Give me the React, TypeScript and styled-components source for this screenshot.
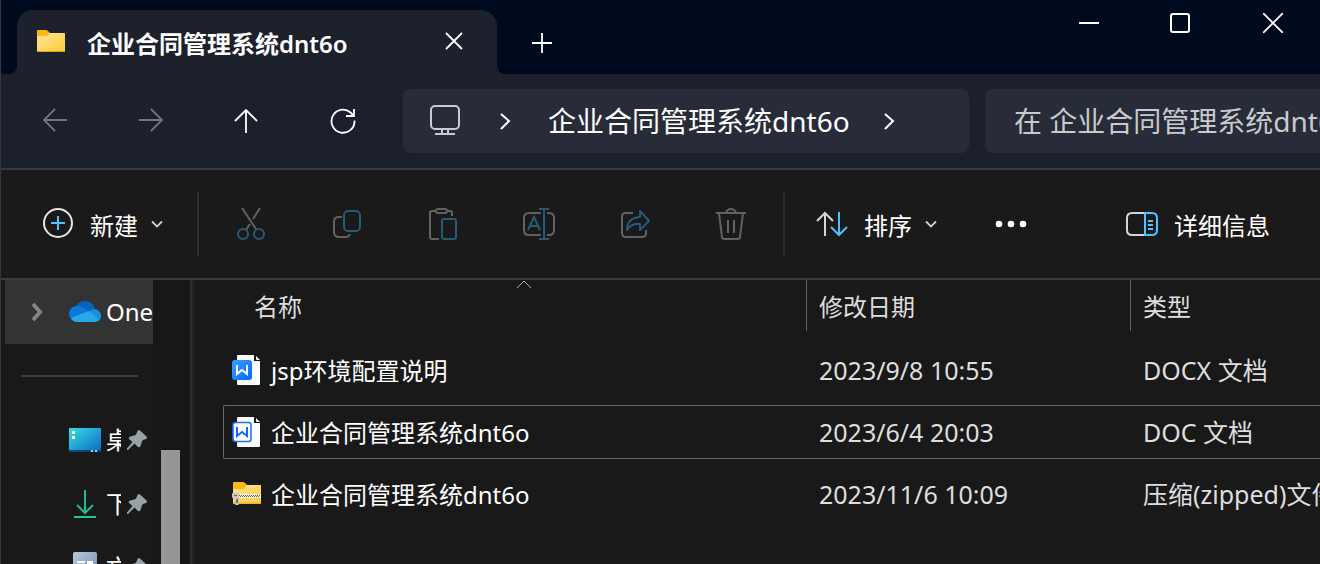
import React from "react";
import styled, { createGlobalStyle } from "styled-components";

const GlobalStyle = createGlobalStyle`
  * { box-sizing: border-box; }
  body {
    margin: 0;
    overflow: hidden;
    background: #191919;
    color: #ffffff;
    font-family: "Noto Sans", "Noto Sans CJK SC", sans-serif;
    font-size: 24px;
    line-height: 32px;
  }
  button, input { font: inherit; color: inherit; background: none; border: 0; padding: 0; margin: 0; }
  svg { display: block; flex: none; }
`;

const accent = "#4cc2ff";

const Window = styled.div`
  display: flex;
  flex-direction: column;
  height: 100vh;
  overflow: hidden;
  border-left: 1px solid #2c3848;
`;

const TitleBar = styled.header`
  display: flex;
  height: 74px;
  background: #1c212c;
`;

const TitleGap = styled.div`
  flex: 0 0 16px;
  background: #000a1f;
  border-bottom-right-radius: 8px;
`;

const TabSlot = styled.div`
  flex: 0 0 480px;
  padding-top: 10px;
  background: linear-gradient(#000a1f 40px, #1c212c 40px);
`;

const Tab = styled.div`
  display: flex;
  align-items: center;
  height: 64px;
  padding: 0 32px 0 20px;
  background: #1c212c;
  border-radius: 16px 16px 0 0;
`;

const TabTitle = styled.span`
  flex: 1;
  padding-left: 22px;
  padding-top: 4px;
  font-weight: 600;
  white-space: nowrap;
`;

const TitleRest = styled.div`
  flex: 1;
  display: flex;
  justify-content: space-between;
  background: #000a1f;
  border-bottom-left-radius: 8px;
`;

const IconButton = styled.button<{ $w: number; $h: number }>`
  display: flex;
  flex: none;
  align-items: center;
  justify-content: center;
  width: ${(p) => p.$w}px;
  height: ${(p) => p.$h}px;
`;

const WindowControls = styled.div`
  display: flex;
  padding-right: 1px;
`;

const NewTab = styled.div`
  padding: 12px 0 0 14px;
`;

const NavBar = styled.nav`
  display: flex;
  align-items: center;
  height: 96px;
  padding-left: 6px;
  background: #1b202c;
  border-bottom: 2px solid #3b393b;
`;

const AddressBar = styled.div`
  display: flex;
  flex: 1;
  align-items: center;
  min-width: 0;
  height: 64px;
  margin: 0 16px 0 12px;
  padding-left: 26px;
  background: #272c38;
  border-radius: 8px;
`;

const Crumb = styled.a`
  padding: 0 32px 0 26px;
  color: #ffffff;
  font-size: 28px;
  line-height: 40px;
  text-decoration: none;
  white-space: nowrap;
`;

const CrumbGap = styled.span`
  padding: 0 10px 0 37px;
`;

const SearchBox = styled.label`
  flex: 0 0 335px;
  height: 64px;
  padding: 12px 0 12px 29px;
  overflow: hidden;
  background: #272c38;
  border-radius: 8px 0 0 8px;
`;

const SearchInput = styled.input`
  width: 460px;
  height: 40px;
  font-size: 28px;
  &::placeholder { color: #c9cace; opacity: 1; }
`;

const Toolbar = styled.div`
  display: flex;
  align-items: center;
  height: 110px;
  background: #1a1a1a;
  border-bottom: 2px solid #3b3b3b;
`;

const Divider = styled.span`
  flex: none;
  width: 2px;
  height: 64px;
  background: #2d2d2d;
`;

const ToolGroup = styled.div`
  display: flex;
  padding: 0 4px;
`;

const ToolButton = styled.button<{ $left: number; $right: number }>`
  display: flex;
  flex: none;
  align-items: center;
  height: 64px;
  padding: 0 ${(p) => p.$right}px 0 ${(p) => p.$left}px;
`;

const ToolLabel = styled.span`
  padding: 4px 12px 0 16px;
  white-space: nowrap;
`;

const Details = styled.div`
  margin-left: auto;
`;

const Body = styled.div`
  display: flex;
  flex: 1;
  min-height: 0;
  overflow: hidden;
`;

const Sidebar = styled.aside`
  flex: 0 0 152px;
  padding-left: 4px;
  overflow: hidden;
`;

const SideItem = styled.a<{ $active?: boolean }>`
  display: flex;
  align-items: center;
  height: 64px;
  padding-left: ${(p) => (p.$active ? 24 : 64)}px;
  background: ${(p) => (p.$active ? "#333333" : "transparent")};
  color: #ffffff;
  text-decoration: none;
`;

const CloudSlot = styled.span`
  padding-left: 26px;
`;

const SideLabel = styled.span<{ $pinned?: boolean }>`
  flex: none;
  width: ${(p) => (p.$pinned ? 15 : 47)}px;
  margin: 0 5px;
  overflow: hidden;
  white-space: nowrap;
`;

const SideRule = styled.hr`
  height: 2px;
  margin: 31px 15px 31px 16px;
  border: 0;
  background: #3d3d3d;
`;

const ScrollTrack = styled.div`
  flex: 0 0 36px;
  padding: 170px 9px 0 8px;
  background: #171717;
`;

const ScrollThumb = styled.div`
  height: 100%;
  background: #969696;
`;

const Splitter = styled.div`
  flex: 0 0 6px;
  background: linear-gradient(90deg, #191919 1px, #2b2b2b 1px, #2b2b2b 3px, #1f1f1f 3px);
`;

const FileArea = styled.main`
  flex: 1;
  min-width: 0;
  padding-left: 28px;
  overflow: hidden;
`;

const Table = styled.table`
  display: block;
  thead, tbody { display: block; }
`;

const Row = styled.tr<{ $focused?: boolean }>`
  display: grid;
  grid-template-columns: 582px 324px minmax(0, 1fr);
  height: 54px;
  margin-bottom: 8px;
  border: 1px solid ${(p) => (p.$focused ? "#6a6a6a" : "transparent")};
  border-right: 0;
  border-radius: 2px 0 0 2px;
`;

const HeadRow = styled(Row)`
  height: 51px;
  margin-bottom: 12px;
  border-width: 0 0 0 1px;
`;

const HeadCell = styled.th<{ $first?: boolean }>`
  display: flex;
  justify-content: space-between;
  padding: ${(p) => (p.$first ? "11px 275px 0 30px" : "11px 0 0 12px")};
  border-left: ${(p) => (p.$first ? "0" : "1px solid #636363")};
  color: #dedede;
  font-weight: 400;
`;

const SortMark = styled.span`
  margin-top: -11px;
`;

const NameCell = styled.td`
  display: flex;
  align-items: center;
  padding: 0 0 0 8px;
  white-space: nowrap;
`;

const FileName = styled.span`
  padding: 2px 0 0 7px;
`;

const Cell = styled.td`
  padding: 10px 0 0 13px;
  color: #dedede;
  font-size: 25px;
  white-space: nowrap;
  overflow: hidden;
`;

type StrokeProps = { w: number; h: number; color?: string; sw?: number; children: React.ReactNode };
const Stroke = ({ w, h, color = "#ffffff", sw = 2, children }: StrokeProps) => (
  <svg width={w} height={h} viewBox={`0 0 ${w} ${h}`} fill="none" stroke={color} strokeWidth={sw} aria-hidden="true">
    {children}
  </svg>
);

const Folder = () => (
  <svg width="28" height="24" viewBox="0 0 28 24" aria-hidden="true">
    <defs>
      <linearGradient id="folder" x1="0" y1="0" x2="1" y2="1">
        <stop offset="0" stopColor="#ffe599" />
        <stop offset="1" stopColor="#ffca3a" />
      </linearGradient>
    </defs>
    <path d="M0 1q0-1 1-1h8q1 0 2 1l2 2h13v4H0z" fill="#fdb713" />
    <path d="M0 6h9q1 0 2-1l2-2h14q1 0 1 1v17q0 1-1 1H1q-1 0-1-1z" fill="url(#folder)" />
    <path d="M0 21h28q0 1-1 1H1q-1 0-1-1z" fill="#e2a01c" />
  </svg>
);

const ZipFolder = () => (
  <svg width="32" height="26" viewBox="0 0 32 26" aria-hidden="true">
    <path d="M1 2q0-1 1-1h9q1 0 2 1l2 2h14v5H1z" fill="#fdb713" />
    <path d="M1 8h10q1 0 2-2l2-2h13q1 0 1 1v17q0 1-1 1H2q-1 0-1-1z" fill="url(#folder)" />
    <path d="M1 21.500h28v.5q0 1-1 1H2q-1 0-1-1z" fill="#eeb02a" />
    <path d="M4 13h25v4H4z" fill="#f3eee0" />
    <path d="M7 14.500h21" stroke="#75633a" strokeWidth="1" strokeDasharray="1 1" />
    <path d="M8 15.500h20" stroke="#75633a" strokeWidth="1" strokeDasharray="1 1" />
    <path d="M0 13q0-1 1-1h5q1 0 1 1v10q0 1-1 1H4q-1 0-1-1v-6H1q-1 0-1-1z" fill="#c9c5bf" />
    <path d="M4 18h2v4H4zM2 14h3v1H2z" fill="#77716a" />
  </svg>
);

const WordDoc = ({ solid }: { solid?: boolean }) => (
  <svg width="32" height="32" viewBox="0 0 32 32" aria-hidden="true">
    <defs>
      <linearGradient id="word" x1="0" y1="0" x2="1" y2="1">
        <stop offset="0" stopColor="#35a3ff" />
        <stop offset="1" stopColor="#0a62ff" />
      </linearGradient>
    </defs>
    <path d="M6 1q-1 0-1 1v28q0 1 1 1h21q1 0 1-1V7h-6V1z" fill="#fbfcff" />
    <path d="M24 2l4 4h-3q-1 0-1-1z" fill="#ffffff" />
    {solid ? (
      <rect x="0" y="6" width="20" height="20" rx="3" fill="url(#word)" />
    ) : (
      <rect x="1" y="6.500" width="18" height="19" rx="2.500" fill="#ffffff" stroke="#1a6cff" strokeWidth="1.500" />
    )}
    <path d="M5 11v9l5-4 5 4v-9" fill="none" stroke={solid ? "#ffffff" : "#1268fb"} strokeWidth="2" />
  </svg>
);

const Cloud = () => (
  <svg width="32" height="22" viewBox="0 0 32 22" aria-hidden="true">
    <path d="M6 7C8 2 12 0 16 0c5 0 9 3 10 8l-9 6z" fill="#0364b8" />
    <path d="M8 5c4 0 6 1 8 3l5 3-16 9C2 19 0 16 0 13c0-4 3-8 8-8z" fill="#0a7ad8" />
    <path d="M20 10l5-2c4 0 7 3 7 7 0 2-1 4-2 5l-10-6z" fill="#1490df" />
    <path d="M2 17l18-7 10 9c-1 1-3 2-5 2H8c-3 0-5-2-6-4z" fill="#28a8ea" />
  </svg>
);

const Desktop = () => (
  <svg width="32" height="24" viewBox="0 0 32 24" aria-hidden="true">
    <defs>
      <linearGradient id="desk" x1="0" y1="0" x2="1" y2="1">
        <stop offset="0" stopColor="#37dfe2" />
        <stop offset="1" stopColor="#0b67c4" />
      </linearGradient>
    </defs>
    <rect width="32" height="24" rx="1" fill="url(#desk)" />
    <path d="M0 22h32v1q0 1-1 1H1q-1 0-1-1z" fill="#0a4770" />
    <path d="M3 3h3v3H3zM3 8h3v3H3z" fill="#ffffff" />
    <path d="M22 22h2v2h-2zM26 22h2v2h-2z" fill="#b9cbd8" />
  </svg>
);

const Download = () => (
  <svg width="32" height="32" viewBox="0 0 32 32" fill="none" aria-hidden="true">
    <path d="M16 2v23M8 17l8 8 8-8" stroke="#23b890" strokeWidth="2" />
    <path d="M5 29h22" stroke="#2cc38a" strokeWidth="2" />
  </svg>
);

const Documents = () => (
  <svg width="32" height="32" viewBox="0 0 32 32" aria-hidden="true">
    <defs>
      <linearGradient id="docs" x1="0" y1="0" x2="1" y2="1">
        <stop offset="0" stopColor="#b9c8dc" />
        <stop offset="1" stopColor="#6b8bb0" />
      </linearGradient>
    </defs>
    <rect x="4" y="0" width="24" height="32" rx="2" fill="url(#docs)" />
    <path d="M8 9h8v2H8zM18 9h6v6h-6zM8 14h8v2H8z" fill="#ffffff" />
  </svg>
);

const Pin = () => (
  <svg width="22" height="22" viewBox="0 0 22 22" aria-hidden="true">
    <path
      d="M12 1.500q1-1 2 0l6.500 6q1 1 0 2l-1 .8q-2 .3-3.500 1.700l-1.500 5q-1 2-2.500 1l-3.500-3.500L2 21H1v-1.500L6.500 13 3 10q-1-1.500.8-2.300L9.500 6q1.500-1.500 1.500-3z"
      fill="#97a2a9"
    />
  </svg>
);

const ChevronRight = () => (
  <Stroke w={14} h={20}>
    <path d="M3 3l8 7-8 8" />
  </Stroke>
);

const ChevronDown = () => (
  <Stroke w={14} h={10} color="#cfcfcf">
    <path d="M2 2.500l5 5 5-5" strokeWidth="1.800" />
  </Stroke>
);

const muted = "#626262";
const mutedBlue = "#285a74";

const tools = [
  {
    label: "剪切",
    icon: (
      <Stroke w={32} h={32} color={muted}>
        <path d="M7 0l14 21M25 0l-7 11M15 16l-4 6" />
        <circle cx="8" cy="26" r="5" stroke={mutedBlue} />
        <circle cx="24" cy="26" r="5" stroke={mutedBlue} />
      </Stroke>
    ),
  },
  {
    label: "复制",
    icon: (
      <Stroke w={32} h={32} color={muted}>
        <path d="M11 9H7q-4 0-4 5v10q0 5 5 5h7q3 0 4-3" />
        <rect x="13" y="3" width="16" height="20" rx="4" stroke={mutedBlue} />
      </Stroke>
    ),
  },
  {
    label: "粘贴",
    icon: (
      <Stroke w={32} h={32} color={muted}>
        <path d="M9 3H5q-2 0-2 2v24q0 2 2 2h7M20 3h3q2 0 2 2v3" />
        <rect x="9" y="1" width="11" height="4" rx="2" />
        <rect x="15" y="11" width="14" height="20" rx="2" stroke={mutedBlue} />
      </Stroke>
    ),
  },
  {
    label: "重命名",
    icon: (
      <Stroke w={32} h={32} color={muted}>
        <path d="M18 5H6Q1 5 1 10v12q0 5 5 5h12M24 5h2q5 0 5 5v12q0 5-5 5h-2" />
        <path d="M5 22l6-13 6 13M7 18h8M21 1v30M16 1h10M16 31h10" stroke={mutedBlue} />
      </Stroke>
    ),
  },
  {
    label: "共享",
    icon: (
      <Stroke w={32} h={32} color={muted}>
        <path d="M14 5H7Q3 5 3 9v16q0 4 4 4h16q4 0 4-4v-3" />
        <path d="M21 3l9 10-9 9v-6q-9-1-13 6 0-12 13-13z" stroke={mutedBlue} strokeLinejoin="round" />
      </Stroke>
    ),
  },
  {
    label: "删除",
    icon: (
      <Stroke w={32} h={32} color={muted}>
        <path d="M1 5h30M11 5q1-4 5-4t5 4M4 5l3 24q0 2 3 2h12q3 0 3-2l3-24M13 12v13M19 12v13" />
      </Stroke>
    ),
  },
];

const files = [
  { name: "jsp环境配置说明", date: "2023/9/8 10:55", type: "DOCX 文档", icon: <WordDoc solid /> },
  { name: "企业合同管理系统dnt6o", date: "2023/6/4 20:03", type: "DOC 文档", icon: <WordDoc />, focused: true },
  { name: "企业合同管理系统dnt6o", date: "2023/11/6 10:09", type: "压缩(zipped)文件夹", icon: <ZipFolder /> },
];

const places = [
  { name: "桌面", icon: <Desktop /> },
  { name: "下载", icon: <Download /> },
  { name: "文档", icon: <Documents /> },
];

export default function App() {
  return (
    <Window>
      <GlobalStyle />
      <TitleBar>
        <TitleGap />
        <TabSlot>
          <Tab>
            <Folder />
            <TabTitle>企业合同管理系统dnt6o</TabTitle>
            <IconButton $w={22} $h={40} aria-label="关闭标签页">
              <Stroke w={20} h={20}>
                <path d="M2 1l16 16M18 1L2 17" strokeWidth="1.800" />
              </Stroke>
            </IconButton>
          </Tab>
        </TabSlot>
        <TitleRest>
          <NewTab>
            <IconButton $w={62} $h={62} aria-label="新建标签页">
              <Stroke w={20} h={20}>
                <path d="M10 0v20M0 10h20" strokeWidth="1.800" />
              </Stroke>
            </IconButton>
          </NewTab>
          <WindowControls>
            <IconButton $w={92} $h={46} aria-label="最小化">
              <Stroke w={20} h={20}>
                <path d="M0 10h20" />
              </Stroke>
            </IconButton>
            <IconButton $w={92} $h={46} aria-label="最大化">
              <Stroke w={22} h={20}>
                <rect x="1" y="1" width="18" height="18" rx="2" />
              </Stroke>
            </IconButton>
            <IconButton $w={92} $h={46} aria-label="关闭">
              <Stroke w={20} h={20}>
                <path d="M0 0l20 20M20 0L0 20" strokeWidth="1.800" />
              </Stroke>
            </IconButton>
          </WindowControls>
        </TitleRest>
      </TitleBar>

      <NavBar>
        <IconButton $w={96} $h={64} aria-label="后退">
          <Stroke w={24} h={26} color="#71757c">
            <path d="M24 12H1M12 1L1 12l11 11" strokeWidth="1.800" />
          </Stroke>
        </IconButton>
        <IconButton $w={96} $h={64} aria-label="前进">
          <Stroke w={24} h={26} color="#71757c">
            <path d="M0 12h23M12 1l11 11-11 11" strokeWidth="1.800" />
          </Stroke>
        </IconButton>
        <IconButton $w={96} $h={64} aria-label="向上">
          <Stroke w={26} h={24}>
            <path d="M12 24V1M1 12L12 1l11 11" strokeWidth="1.800" />
          </Stroke>
        </IconButton>
        <IconButton $w={96} $h={64} aria-label="刷新">
          <Stroke w={26} h={26}>
            <path d="M24.500 12.500a11.500 11.500 0 1 1-4-8L24 8M24 1v7h-8" strokeWidth="1.800" />
          </Stroke>
        </IconButton>
        <AddressBar>
          <Stroke w={32} h={32} color="#c9cbd0">
            <rect x="2" y="1" width="28" height="23" rx="4" />
            <path d="M13 24v5M19 24v5M6 29h20" />
          </Stroke>
          <CrumbGap>
            <ChevronRight />
          </CrumbGap>
          <Crumb href="#">企业合同管理系统dnt6o</Crumb>
          <ChevronRight />
        </AddressBar>
        <SearchBox>
          <SearchInput type="text" aria-label="搜索" placeholder="在 企业合同管理系统dnt6o 中搜索" />
        </SearchBox>
      </NavBar>

      <Toolbar>
        <ToolButton $left={41} $right={33}>
          <Stroke w={32} h={32} color="#e6e6e6">
            <circle cx="16" cy="15" r="14" />
            <path d="M16 8v14M9 15h14" stroke={accent} />
          </Stroke>
          <ToolLabel>新建</ToolLabel>
          <ChevronDown />
        </ToolButton>
        <Divider />
        <ToolGroup>
          {tools.map((t) => (
            <IconButton key={t.label} $w={96} $h={64} aria-label={t.label} disabled>
              {t.icon}
            </IconButton>
          ))}
        </ToolGroup>
        <Divider />
        <ToolButton $left={31} $right={25}>
          <Stroke w={32} h={32} color="#d6d6d6">
            <path d="M9 28V5M1 13l8-8 8 8" />
            <path d="M23 4v23M15 19l8 8 8-8" stroke={accent} />
          </Stroke>
          <ToolLabel>排序</ToolLabel>
          <ChevronDown />
        </ToolButton>
        <IconButton $w={96} $h={64} aria-label="更多">
          <svg width="32" height="8" viewBox="0 0 32 8" fill="#ffffff" aria-hidden="true">
            <circle cx="4" cy="4" r="3.300" />
            <circle cx="16" cy="4" r="3.300" />
            <circle cx="28" cy="4" r="3.300" />
          </svg>
        </IconButton>
        <Details>
          <ToolButton $left={16} $right={38}>
            <Stroke w={32} h={32} color="#d6d6d6">
              <path d="M19 5H6Q1 5 1 10v12q0 5 5 5h13" />
              <path d="M19 5h7q5 0 5 5v12q0 5-5 5h-7zM22 13h5M22 17h5M22 21h5" stroke={accent} />
            </Stroke>
            <ToolLabel>详细信息</ToolLabel>
          </ToolButton>
        </Details>
      </Toolbar>

      <Body>
        <Sidebar>
          <SideItem href="#" $active>
            <Stroke w={14} h={20} color="#858585" sw={4}>
              <path d="M4 2l7 8-7 8" />
            </Stroke>
            <CloudSlot>
              <Cloud />
            </CloudSlot>
            <SideLabel>OneDrive</SideLabel>
          </SideItem>
          <SideRule />
          {places.map((p) => (
            <SideItem key={p.name} href="#">
              {p.icon}
              <SideLabel $pinned>{p.name}</SideLabel>
              <Pin />
            </SideItem>
          ))}
        </Sidebar>
        <ScrollTrack>
          <ScrollThumb />
        </ScrollTrack>
        <Splitter />
        <FileArea>
          <Table cellSpacing={0}>
            <thead>
              <HeadRow>
                <HeadCell $first>
                  名称
                  <SortMark>
                    <Stroke w={14} h={9} color="#b0b0b0" sw={1}>
                      <path d="M0 8l7-7 7 7" />
                    </Stroke>
                  </SortMark>
                </HeadCell>
                <HeadCell>修改日期</HeadCell>
                <HeadCell>类型</HeadCell>
              </HeadRow>
            </thead>
            <tbody>
              {files.map((f) => (
                <Row key={f.date} $focused={f.focused}>
                  <NameCell>
                    {f.icon}
                    <FileName>{f.name}</FileName>
                  </NameCell>
                  <Cell>{f.date}</Cell>
                  <Cell>{f.type}</Cell>
                </Row>
              ))}
            </tbody>
          </Table>
        </FileArea>
      </Body>
    </Window>
  );
}
